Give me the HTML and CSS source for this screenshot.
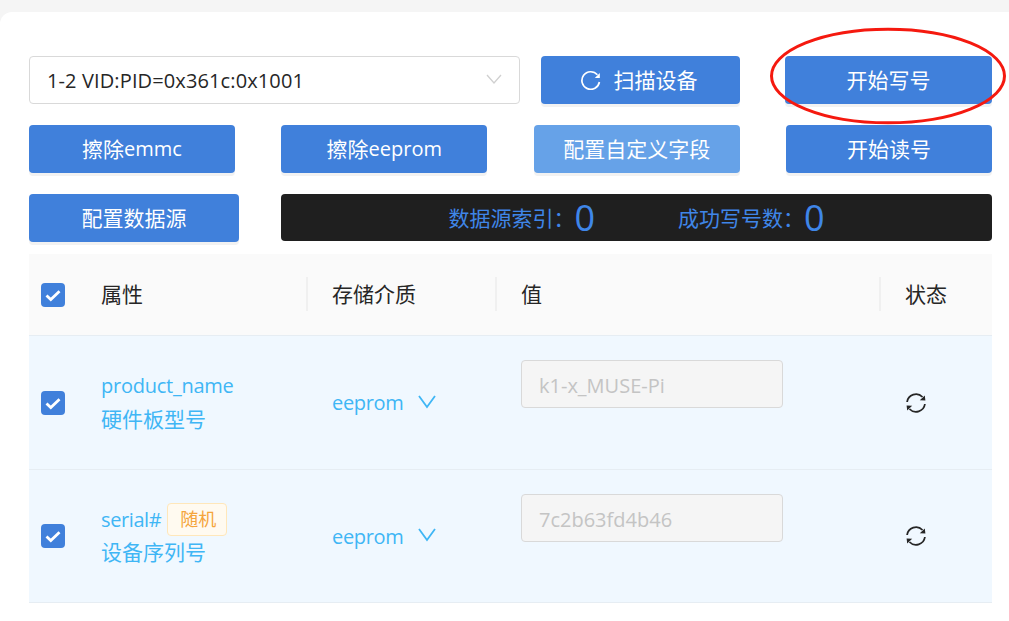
FILE: index.html
```html
<!DOCTYPE html>
<html lang="zh-CN">
<head>
<meta charset="utf-8">
<title>写号</title>
<link rel="stylesheet" href="styles.css">
</head>
<body>
<main class="card">
  <div class="row row-device">
    <div class="select">
      <span class="lat-device">1-2 VID:PID=0x361c:0x1001</span>
      <svg class="select-arrow" width="16" height="10" viewBox="0 0 16 10"><path d="M1 1l7 8 7-8" fill="none" stroke="#d0d0d0" stroke-width="1.3"/></svg>
    </div>
    <button class="btn btn-scan">
      <svg class="scan-icon" width="20" height="20" viewBox="0 0 20 20"><path d="M16.4 4.8A8.8 8.8 0 1 0 18.4 12" fill="none" stroke="#fff" stroke-width="1.7"/><path d="M18.8 3v5h-5z" fill="#fff"/></svg>
      扫描设备
    </button>
    <button class="btn btn-write">开始写号</button>
  </div>
  <div class="row row-actions">
    <button class="btn btn-action">擦除<span class="lat">emmc</span></button>
    <button class="btn btn-action">擦除<span class="lat">eeprom</span></button>
    <button class="btn btn-action btn-light">配置自定义字段</button>
    <button class="btn btn-action">开始读号</button>
  </div>
  <div class="row row-source">
    <button class="btn btn-source">配置数据源</button>
    <div class="stats">
      <span class="stat stat-index"><span class="stat-label">数据源索引：</span><b>0</b></span>
      <span class="stat"><span class="stat-label">成功写号数：</span><b>0</b></span>
    </div>
  </div>
  <section class="table">
    <div class="tr thead">
      <div class="cell c-check"><span class="check"><svg width="24" height="24" viewBox="0 0 24 24"><path d="M5.5 12.5l4.3 4 8.7-8.2" fill="none" stroke="#fff" stroke-width="2.8"/></svg></span></div>
      <div class="cell c-attr head">属性</div>
      <div class="cell c-media head sep">存储介质</div>
      <div class="cell c-value head sep">值</div>
      <div class="cell c-state head sep">状态</div>
    </div>
    <div class="tr tbody">
      <div class="cell c-check"><span class="check"><svg width="24" height="24" viewBox="0 0 24 24"><path d="M5.5 12.5l4.3 4 8.7-8.2" fill="none" stroke="#fff" stroke-width="2.8"/></svg></span></div>
      <div class="cell c-attr attr">
        <div class="attr-line"><span class="lat lat-name">product_name</span></div>
        <div class="attr-line">硬件板型号</div>
      </div>
      <div class="cell c-media media"><span class="lat lat-media">eeprom</span><svg class="media-arrow" width="18" height="14" viewBox="0 0 18 14"><path d="M1 1l8 11 8-11" fill="none" stroke="#3fb6f5" stroke-width="1.8"/></svg></div>
      <div class="cell c-value value"><div class="input">k1-x_MUSE-Pi</div></div>
      <div class="cell c-state state"><svg width="22" height="22" viewBox="0 0 22 22"><path d="M2.1 10A9 9 0 0 1 17.5 5M19.9 12A9 9 0 0 1 4.5 17" fill="none" stroke="#262626" stroke-width="1.8"/><path d="M20.4 8.6l-5.6-.4 5-4.6zM1.6 13.4l5.6.4-5 4.6z" fill="#262626"/></svg></div>
    </div>
    <div class="tr tbody">
      <div class="cell c-check"><span class="check"><svg width="24" height="24" viewBox="0 0 24 24"><path d="M5.5 12.5l4.3 4 8.7-8.2" fill="none" stroke="#fff" stroke-width="2.8"/></svg></span></div>
      <div class="cell c-attr attr">
        <div class="attr-line"><span class="lat lat-serial">serial#</span><span class="tag">随机</span></div>
        <div class="attr-line">设备序列号</div>
      </div>
      <div class="cell c-media media"><span class="lat lat-media">eeprom</span><svg class="media-arrow" width="18" height="14" viewBox="0 0 18 14"><path d="M1 1l8 11 8-11" fill="none" stroke="#3fb6f5" stroke-width="1.8"/></svg></div>
      <div class="cell c-value value"><div class="input">7c2b63fd4b46</div></div>
      <div class="cell c-state state"><svg width="22" height="22" viewBox="0 0 22 22"><path d="M2.1 10A9 9 0 0 1 17.5 5M19.9 12A9 9 0 0 1 4.5 17" fill="none" stroke="#262626" stroke-width="1.8"/><path d="M20.4 8.6l-5.6-.4 5-4.6zM1.6 13.4l5.6.4-5 4.6z" fill="#262626"/></svg></div>
    </div>
  </section>
  <svg class="circle" width="240" height="100" viewBox="0 0 240 100"><ellipse cx="119" cy="49" rx="116.5" ry="46.8" fill="none" stroke="#f5190f" stroke-width="3"/></svg>
</main>
</body>
</html>
```

FILE: styles.css
```css
* { box-sizing: border-box; }
html, body { margin: 0; height: 100%; }
body {
  background: #f5f5f5;
  padding-top: 12px;
  overflow: hidden;
  font-family: "Open Sans", "Noto Sans CJK SC", sans-serif;
  font-size: 21px;
  color: #262626;
}
.lat { font-size: 20px; }
.lat-device { font-size: 20px; letter-spacing: .12px; }
.lat-name { letter-spacing: -.25px; }
.lat-serial { letter-spacing: -.4px; }
.lat-media { letter-spacing: -.35px; }
.card {
  position: relative;
  height: 609px;
  background: #fff;
  border-radius: 12px 0 0 0;
  padding: 44px 17px 0 29px;
}
.row { display: flex; height: 48px; }
.row-actions { justify-content: space-between; margin-top: 21px; }
.row-source { margin-top: 21px; }
.btn {
  display: flex;
  align-items: center;
  justify-content: center;
  height: 48px;
  padding: 0 0 2px;
  border: 0;
  border-radius: 4px;
  background: #4080db;
  color: #fff;
  font: inherit;
  box-shadow: 0 3px 0 #f2f2f2;
}
.select {
  flex: 1;
  display: flex;
  align-items: center;
  justify-content: space-between;
  margin-right: 21px;
  padding: 0 17px;
  background: #fff;
  border: 1px solid #d9d9d9;
  border-radius: 4px;
}
.select-arrow { margin-top: -2px; }
.btn-scan { width: 199px; margin-right: 45px; gap: 13px; }
.scan-icon { margin-left: -3px; margin-top: 2px; }
.btn-write { width: 207px; }
.btn-action { width: 206px; }
.btn-light { background: #66a2e8; }
.btn-source { width: 210px; margin-right: 42px; }
.stats {
  flex: 1;
  display: flex;
  justify-content: center;
  align-items: center;
  height: 47px;
  background: #1f1f1f;
  border-radius: 4px;
  color: #3f86e8;
}
.stat { display: flex; align-items: center; }
.stat-label { margin-top: -2px; }
.stat b { font-size: 36px; font-weight: 400; line-height: 47px; }
.stat-index { margin-right: 83px; }
.table { margin-top: 12px; }
.tr { display: flex; align-items: stretch; }
.thead { height: 82px; background: #fafafa; border-bottom: 1px solid #e6edf3; }
.tbody { height: 134px; background: #f0f8ff; border-bottom: 1px solid #e6edf3; }
.tbody:last-child { height: 133px; }
.cell { display: flex; align-items: center; position: relative; }
.head { padding-bottom: 3px; }
.c-check { width: 72px; padding-left: 12px; }
.c-attr { width: 205px; }
.c-media { width: 189px; padding-left: 26px; }
.c-value { width: 384px; padding-left: 26px; }
.c-state { flex: 1; padding-left: 26px; }
.sep::before {
  content: "";
  position: absolute;
  left: 0;
  top: 23px;
  width: 2px;
  height: 34px;
  background: #f0f0f0;
}
.check {
  display: block;
  width: 24px;
  height: 24px;
  background: #4080db;
  border-radius: 4px;
}
.check svg { display: block; }
.attr { flex-direction: column; align-items: flex-start; justify-content: center; padding-bottom: 2px; color: #3fb6f5; }
.attr-line { display: flex; align-items: center; height: 33px; }
.attr-line + .attr-line { margin-top: -1px; }
.tag {
  display: inline-block;
  height: 33px;
  line-height: 31px;
  margin-left: 6px;
  padding: 0 10px 0 12px;
  font-size: 18px;
  color: #f5a53c;
  background: #fffaf0;
  border: 1px solid #ffe7ba;
  border-radius: 4px;
}
.media { color: #3fb6f5; }
.media-arrow { margin-left: 15px; margin-top: -2px; }
.value { align-items: flex-start; padding-top: 24px; }
.input {
  width: 262px;
  height: 48px;
  padding: 0 17px;
  font-size: 20px;
  line-height: 50px;
  color: #c4c4c4;
  background: #f5f5f5;
  border: 1px solid #d9d9d9;
  border-radius: 4px;
}
.state svg { display: block; }
.circle { position: absolute; left: 769px; top: 15px; pointer-events: none; }
```
